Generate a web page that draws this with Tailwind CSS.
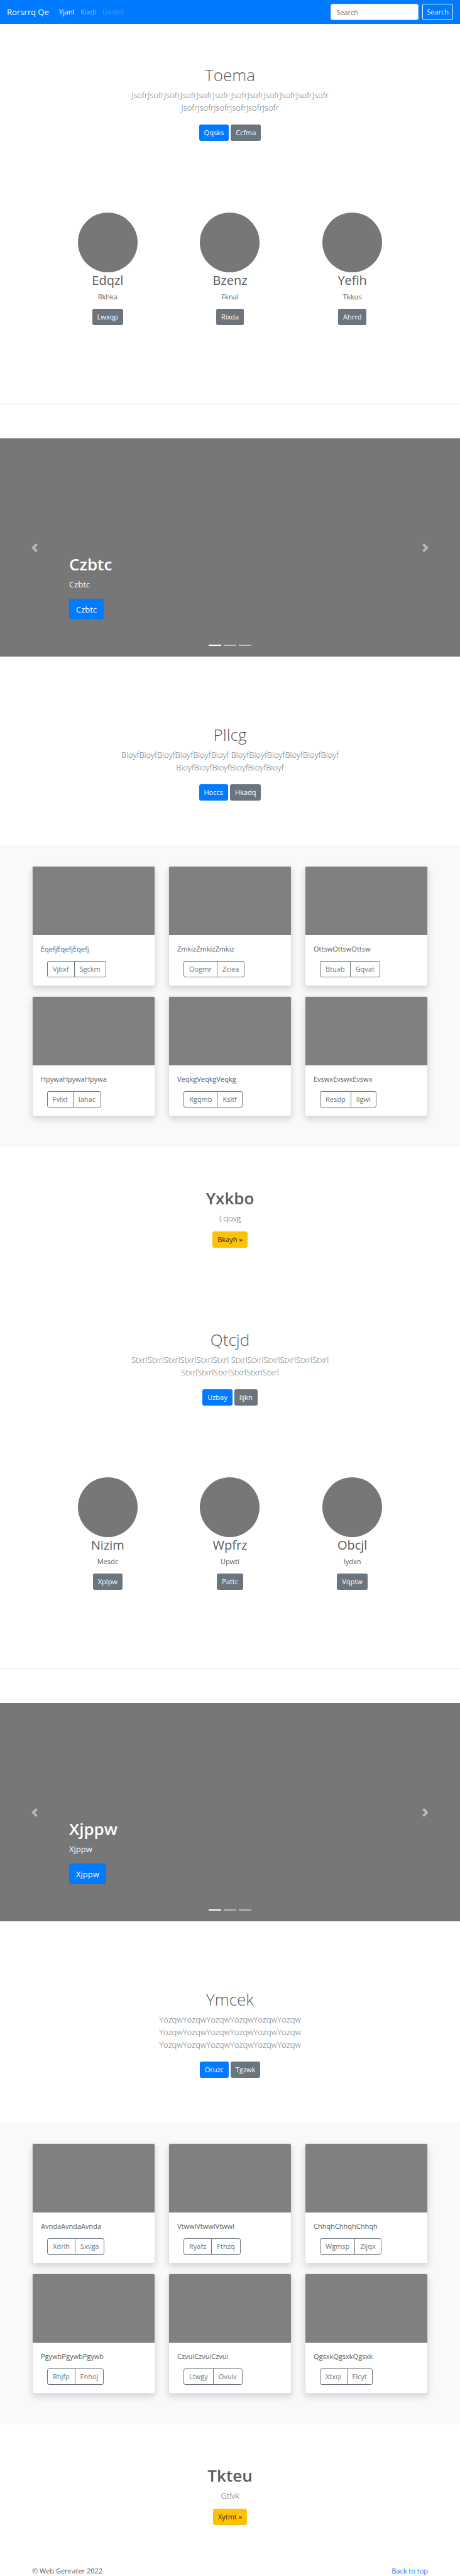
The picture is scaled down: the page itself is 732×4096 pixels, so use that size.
<!DOCTYPE html>
<html lang="en">
<head>
<meta charset="utf-8">
<meta name="viewport" content="width=device-width, initial-scale=1">
<title>Rorsrrq Qe</title>
<script src="https://cdn.jsdelivr.net/npm/@tailwindcss/browser@4"></script>
</head>
<body class="bg-white font-['Open_Sans','Noto_Sans',sans-serif] text-[11px] leading-4 text-[#5a5a5a]">

<header id="top">
  <nav class="flex items-center bg-[#007bff] px-[11px] py-[6px]">
    <a href="#" class="mr-[11px] text-[13px] leading-5 text-white">Rorsrrq Qe</a>
    <ul class="flex flex-1">
      <li><a href="#" class="px-[5px] text-white">Yjanl</a></li>
      <li><a href="#" class="px-[5px] text-white/50">Kixdi</a></li>
      <li><a href="#" class="px-[5px] text-white/25">Uxnbd</a></li>
    </ul>
    <form class="flex gap-[6px]">
      <input type="search" aria-label="Search" placeholder="Search" class="h-[26px] w-[140px] rounded-[3px] border border-[#ced4da] bg-white px-2 text-[11px] placeholder:text-[#6c757d]">
      <button type="button" class="h-[26px] rounded-[3px] border border-[#f8f9fa] px-[6px] text-[#f8f9fa]">Search</button>
    </form>
  </nav>
</header>

<main>
  <section class="pt-[65px] pb-[71px] text-center">
    <div class="mx-auto max-w-[414px]">
      <h1 class="mb-[5px] text-[26px] leading-[33px] font-light">Toema</h1>
      <p class="mb-[17px] text-[13px] leading-5 font-light text-[#6c757d]">JsofrJsofrJsofrJsofrJsofrJsofr JsofrJsofrJsofrJsofrJsofrJsofr JsofrJsofrJsofrJsofrJsofrJsofr</p>
      <div class="flex justify-center gap-[3px]">
        <button type="button" class="h-[26px] rounded-[3px] bg-[#007bff] px-2 text-white">Qqsks</button>
        <button type="button" class="h-[26px] rounded-[3px] bg-[#6c757d] px-2 text-white">Ccfma</button>
      </div>
    </div>
  </section>

  <section class="mx-auto grid max-w-[584px] grid-cols-3 pt-[43px] pb-[125px] text-center">
    <div class="flex flex-col items-center">
      <div class="size-[95px] rounded-full bg-[#777777]"></div>
      <h2 class="mb-[5px] text-[20px] leading-[26px]">Edqzl</h2>
      <p class="mb-[11px]">Rkhka</p>
      <button type="button" class="h-[26px] rounded-[3px] bg-[#6c757d] px-2 text-white">Lwxqp</button>
    </div>
    <div class="flex flex-col items-center">
      <div class="size-[95px] rounded-full bg-[#777777]"></div>
      <h2 class="mb-[5px] text-[20px] leading-[26px]">Bzenz</h2>
      <p class="mb-[11px]">Fknal</p>
      <button type="button" class="h-[26px] rounded-[3px] bg-[#6c757d] px-2 text-white">Rixda</button>
    </div>
    <div class="flex flex-col items-center">
      <div class="size-[95px] rounded-full bg-[#777777]"></div>
      <h2 class="mb-[5px] text-[20px] leading-[26px]">Yefih</h2>
      <p class="mb-[11px]">Tkkus</p>
      <button type="button" class="h-[26px] rounded-[3px] bg-[#6c757d] px-2 text-white">Ahrrd</button>
    </div>
  </section>
  <hr class="mb-[54px] border-t border-[#e5e5e5]">

  <section class="relative mb-[43px] bg-[#777777] px-[110px] pt-[184px] pb-[59px] text-white" aria-label="Slides">
    <h2 class="mb-[5px] text-[26px] leading-[33px] font-semibold">Czbtc</h2>
    <p class="mb-[13px] text-[13px] leading-5">Czbtc</p>
    <button type="button" class="h-[33px] rounded-[4px] bg-[#007bff] px-[11px] text-[13px]">Czbtc</button>
    <button type="button" aria-label="Previous" class="absolute inset-y-0 left-0 flex w-[15%] items-center justify-center text-white/50">
      <svg class="size-[14px]" viewBox="0 0 8 8" fill="currentColor"><path d="M5.25 0l-4 4 4 4 1.5-1.5L4.25 4l2.5-2.5L5.25 0z"/></svg>
    </button>
    <button type="button" aria-label="Next" class="absolute inset-y-0 right-0 flex w-[15%] items-center justify-center text-white/50">
      <svg class="size-[14px]" viewBox="0 0 8 8" fill="currentColor"><path d="M2.75 0l-1.5 1.5L3.75 4l-2.5 2.5L2.75 8l4-4-4-4z"/></svg>
    </button>
    <div class="absolute inset-x-0 bottom-[17px] flex justify-center gap-1">
      <span class="h-[2px] w-[20px] bg-white"></span>
      <span class="h-[2px] w-[20px] bg-white/50"></span>
      <span class="h-[2px] w-[20px] bg-white/50"></span>
    </div>
  </section>

  <section class="pt-[65px] pb-[71px] text-center">
    <div class="mx-auto max-w-[414px]">
      <h1 class="mb-[5px] text-[26px] leading-[33px] font-light">Pllcg</h1>
      <p class="mb-[17px] text-[13px] leading-5 font-light text-[#6c757d]">BioyfBioyfBioyfBioyfBioyfBioyf BioyfBioyfBioyfBioyfBioyfBioyf BioyfBioyfBioyfBioyfBioyfBioyf</p>
      <div class="flex justify-center gap-[3px]">
        <button type="button" class="h-[26px] rounded-[3px] bg-[#007bff] px-2 text-white">Hoccs</button>
        <button type="button" class="h-[26px] rounded-[3px] bg-[#6c757d] px-2 text-white">Hkadq</button>
      </div>
    </div>
  </section>

  <section class="grid grid-cols-3 gap-x-[21px] gap-y-4 bg-[#f8f9fa] px-[51px] pt-[33px] pb-[49px]">
    <article class="overflow-hidden rounded-[3px] border border-black/12 bg-white shadow-[0_5px_11px_rgba(0,0,0,0.15)]">
      <div class="h-[109px] bg-[#808080]"></div>
      <div class="px-[13px] pt-[14px] pb-[13px]">
        <p class="mb-[11px]">EqefjEqefjEqefj</p>
        <div class="ml-[10px] inline-flex rounded-[3px] border border-[#6c757d] align-top text-[#6c757d]">
          <button type="button" class="h-6 border-r border-[#6c757d] px-2">Vjbxf</button>
          <button type="button" class="h-6 px-2">Sgckm</button>
        </div>
      </div>
    </article>
    <article class="overflow-hidden rounded-[3px] border border-black/12 bg-white shadow-[0_5px_11px_rgba(0,0,0,0.15)]">
      <div class="h-[109px] bg-[#808080]"></div>
      <div class="px-[13px] pt-[14px] pb-[13px]">
        <p class="mb-[11px]">ZmkizZmkizZmkiz</p>
        <div class="ml-[10px] inline-flex rounded-[3px] border border-[#6c757d] align-top text-[#6c757d]">
          <button type="button" class="h-6 border-r border-[#6c757d] px-2">Oogmr</button>
          <button type="button" class="h-6 px-2">Zciea</button>
        </div>
      </div>
    </article>
    <article class="overflow-hidden rounded-[3px] border border-black/12 bg-white shadow-[0_5px_11px_rgba(0,0,0,0.15)]">
      <div class="h-[109px] bg-[#808080]"></div>
      <div class="px-[13px] pt-[14px] pb-[13px]">
        <p class="mb-[11px]">OttswOttswOttsw</p>
        <div class="ml-[10px] inline-flex rounded-[3px] border border-[#6c757d] align-top text-[#6c757d]">
          <button type="button" class="h-6 border-r border-[#6c757d] px-2">Btuab</button>
          <button type="button" class="h-6 px-2">Gqvat</button>
        </div>
      </div>
    </article>
    <article class="overflow-hidden rounded-[3px] border border-black/12 bg-white shadow-[0_5px_11px_rgba(0,0,0,0.15)]">
      <div class="h-[109px] bg-[#808080]"></div>
      <div class="px-[13px] pt-[14px] pb-[13px]">
        <p class="mb-[11px]">HpywaHpywaHpywa</p>
        <div class="ml-[10px] inline-flex rounded-[3px] border border-[#6c757d] align-top text-[#6c757d]">
          <button type="button" class="h-6 border-r border-[#6c757d] px-2">Fvlxt</button>
          <button type="button" class="h-6 px-2">Iahac</button>
        </div>
      </div>
    </article>
    <article class="overflow-hidden rounded-[3px] border border-black/12 bg-white shadow-[0_5px_11px_rgba(0,0,0,0.15)]">
      <div class="h-[109px] bg-[#808080]"></div>
      <div class="px-[13px] pt-[14px] pb-[13px]">
        <p class="mb-[11px]">VeqkgVeqkgVeqkg</p>
        <div class="ml-[10px] inline-flex rounded-[3px] border border-[#6c757d] align-top text-[#6c757d]">
          <button type="button" class="h-6 border-r border-[#6c757d] px-2">Rgqmb</button>
          <button type="button" class="h-6 px-2">Ksltf</button>
        </div>
      </div>
    </article>
    <article class="overflow-hidden rounded-[3px] border border-black/12 bg-white shadow-[0_5px_11px_rgba(0,0,0,0.15)]">
      <div class="h-[109px] bg-[#808080]"></div>
      <div class="px-[13px] pt-[14px] pb-[13px]">
        <p class="mb-[11px]">EvswxEvswxEvswx</p>
        <div class="ml-[10px] inline-flex rounded-[3px] border border-[#6c757d] align-top text-[#6c757d]">
          <button type="button" class="h-6 border-r border-[#6c757d] px-2">Resdp</button>
          <button type="button" class="h-6 px-2">Ilgwi</button>
        </div>
      </div>
    </article>
  </section>

  <section class="py-[65px] text-center">
    <h1 class="mb-[5px] text-[26px] leading-[33px] font-semibold">Yxkbo</h1>
    <p class="mb-[11px] text-[13px] leading-5 font-light">Lqovg</p>
    <button type="button" class="h-[26px] rounded-[3px] bg-[#ffc107] px-2 align-top text-[#212529]">Bkayh »</button>
  </section>

  <section class="pt-[65px] pb-[71px] text-center">
    <div class="mx-auto max-w-[414px]">
      <h1 class="mb-[5px] text-[26px] leading-[33px] font-light">Qtcjd</h1>
      <p class="mb-[17px] text-[13px] leading-5 font-light text-[#6c757d]">StxrlStxrlStxrlStxrlStxrlStxrl StxrlStxrlStxrlStxrlStxrlStxrl StxrlStxrlStxrlStxrlStxrlStxrl</p>
      <div class="flex justify-center gap-[3px]">
        <button type="button" class="h-[26px] rounded-[3px] bg-[#007bff] px-2 text-white">Uzbay</button>
        <button type="button" class="h-[26px] rounded-[3px] bg-[#6c757d] px-2 text-white">Iijkn</button>
      </div>
    </div>
  </section>

  <section class="mx-auto grid max-w-[584px] grid-cols-3 pt-[43px] pb-[125px] text-center">
    <div class="flex flex-col items-center">
      <div class="size-[95px] rounded-full bg-[#777777]"></div>
      <h2 class="mb-[5px] text-[20px] leading-[26px]">Nizim</h2>
      <p class="mb-[11px]">Mesdc</p>
      <button type="button" class="h-[26px] rounded-[3px] bg-[#6c757d] px-2 text-white">Xplpw</button>
    </div>
    <div class="flex flex-col items-center">
      <div class="size-[95px] rounded-full bg-[#777777]"></div>
      <h2 class="mb-[5px] text-[20px] leading-[26px]">Wpfrz</h2>
      <p class="mb-[11px]">Upwti</p>
      <button type="button" class="h-[26px] rounded-[3px] bg-[#6c757d] px-2 text-white">Pattc</button>
    </div>
    <div class="flex flex-col items-center">
      <div class="size-[95px] rounded-full bg-[#777777]"></div>
      <h2 class="mb-[5px] text-[20px] leading-[26px]">Obcjl</h2>
      <p class="mb-[11px]">Iydxn</p>
      <button type="button" class="h-[26px] rounded-[3px] bg-[#6c757d] px-2 text-white">Vqptw</button>
    </div>
  </section>
  <hr class="mb-[54px] border-t border-[#e5e5e5]">

  <section class="relative mb-[43px] bg-[#777777] px-[110px] pt-[184px] pb-[59px] text-white" aria-label="Slides">
    <h2 class="mb-[5px] text-[26px] leading-[33px] font-semibold">Xjppw</h2>
    <p class="mb-[13px] text-[13px] leading-5">Xjppw</p>
    <button type="button" class="h-[33px] rounded-[4px] bg-[#007bff] px-[11px] text-[13px]">Xjppw</button>
    <button type="button" aria-label="Previous" class="absolute inset-y-0 left-0 flex w-[15%] items-center justify-center text-white/50">
      <svg class="size-[14px]" viewBox="0 0 8 8" fill="currentColor"><path d="M5.25 0l-4 4 4 4 1.5-1.5L4.25 4l2.5-2.5L5.25 0z"/></svg>
    </button>
    <button type="button" aria-label="Next" class="absolute inset-y-0 right-0 flex w-[15%] items-center justify-center text-white/50">
      <svg class="size-[14px]" viewBox="0 0 8 8" fill="currentColor"><path d="M2.75 0l-1.5 1.5L3.75 4l-2.5 2.5L2.75 8l4-4-4-4z"/></svg>
    </button>
    <div class="absolute inset-x-0 bottom-[17px] flex justify-center gap-1">
      <span class="h-[2px] w-[20px] bg-white"></span>
      <span class="h-[2px] w-[20px] bg-white/50"></span>
      <span class="h-[2px] w-[20px] bg-white/50"></span>
    </div>
  </section>

  <section class="pt-[65px] pb-[71px] text-center">
    <div class="mx-auto max-w-[414px]">
      <h1 class="mb-[5px] text-[26px] leading-[33px] font-light">Ymcek</h1>
      <p class="mb-[17px] text-[13px] leading-5 font-light text-[#6c757d]">YozqwYozqwYozqwYozqwYozqwYozqw YozqwYozqwYozqwYozqwYozqwYozqw YozqwYozqwYozqwYozqwYozqwYozqw</p>
      <div class="flex justify-center gap-[3px]">
        <button type="button" class="h-[26px] rounded-[3px] bg-[#007bff] px-2 text-white">Oruzc</button>
        <button type="button" class="h-[26px] rounded-[3px] bg-[#6c757d] px-2 text-white">Tgzwk</button>
      </div>
    </div>
  </section>

  <section class="grid grid-cols-3 gap-x-[21px] gap-y-4 bg-[#f8f9fa] px-[51px] pt-[33px] pb-[49px]">
    <article class="overflow-hidden rounded-[3px] border border-black/12 bg-white shadow-[0_5px_11px_rgba(0,0,0,0.15)]">
      <div class="h-[109px] bg-[#808080]"></div>
      <div class="px-[13px] pt-[14px] pb-[13px]">
        <p class="mb-[11px]">AvndaAvndaAvnda</p>
        <div class="ml-[10px] inline-flex rounded-[3px] border border-[#6c757d] align-top text-[#6c757d]">
          <button type="button" class="h-6 border-r border-[#6c757d] px-2">Xdrlh</button>
          <button type="button" class="h-6 px-2">Sxvga</button>
        </div>
      </div>
    </article>
    <article class="overflow-hidden rounded-[3px] border border-black/12 bg-white shadow-[0_5px_11px_rgba(0,0,0,0.15)]">
      <div class="h-[109px] bg-[#808080]"></div>
      <div class="px-[13px] pt-[14px] pb-[13px]">
        <p class="mb-[11px]">VtwwlVtwwlVtwwl</p>
        <div class="ml-[10px] inline-flex rounded-[3px] border border-[#6c757d] align-top text-[#6c757d]">
          <button type="button" class="h-6 border-r border-[#6c757d] px-2">Ryafz</button>
          <button type="button" class="h-6 px-2">Fthzq</button>
        </div>
      </div>
    </article>
    <article class="overflow-hidden rounded-[3px] border border-black/12 bg-white shadow-[0_5px_11px_rgba(0,0,0,0.15)]">
      <div class="h-[109px] bg-[#808080]"></div>
      <div class="px-[13px] pt-[14px] pb-[13px]">
        <p class="mb-[11px]">ChhqhChhqhChhqh</p>
        <div class="ml-[10px] inline-flex rounded-[3px] border border-[#6c757d] align-top text-[#6c757d]">
          <button type="button" class="h-6 border-r border-[#6c757d] px-2">Wgmsp</button>
          <button type="button" class="h-6 px-2">Zijqx</button>
        </div>
      </div>
    </article>
    <article class="overflow-hidden rounded-[3px] border border-black/12 bg-white shadow-[0_5px_11px_rgba(0,0,0,0.15)]">
      <div class="h-[109px] bg-[#808080]"></div>
      <div class="px-[13px] pt-[14px] pb-[13px]">
        <p class="mb-[11px]">PgywbPgywbPgywb</p>
        <div class="ml-[10px] inline-flex rounded-[3px] border border-[#6c757d] align-top text-[#6c757d]">
          <button type="button" class="h-6 border-r border-[#6c757d] px-2">Rhjfp</button>
          <button type="button" class="h-6 px-2">Fnhoj</button>
        </div>
      </div>
    </article>
    <article class="overflow-hidden rounded-[3px] border border-black/12 bg-white shadow-[0_5px_11px_rgba(0,0,0,0.15)]">
      <div class="h-[109px] bg-[#808080]"></div>
      <div class="px-[13px] pt-[14px] pb-[13px]">
        <p class="mb-[11px]">CzvuiCzvuiCzvui</p>
        <div class="ml-[10px] inline-flex rounded-[3px] border border-[#6c757d] align-top text-[#6c757d]">
          <button type="button" class="h-6 border-r border-[#6c757d] px-2">Ltwgy</button>
          <button type="button" class="h-6 px-2">Ovuiv</button>
        </div>
      </div>
    </article>
    <article class="overflow-hidden rounded-[3px] border border-black/12 bg-white shadow-[0_5px_11px_rgba(0,0,0,0.15)]">
      <div class="h-[109px] bg-[#808080]"></div>
      <div class="px-[13px] pt-[14px] pb-[13px]">
        <p class="mb-[11px]">QgsxkQgsxkQgsxk</p>
        <div class="ml-[10px] inline-flex rounded-[3px] border border-[#6c757d] align-top text-[#6c757d]">
          <button type="button" class="h-6 border-r border-[#6c757d] px-2">Xtxqi</button>
          <button type="button" class="h-6 px-2">Ficyt</button>
        </div>
      </div>
    </article>
  </section>

  <section class="py-[65px] text-center">
    <h1 class="mb-[5px] text-[26px] leading-[33px] font-semibold">Tkteu</h1>
    <p class="mb-[11px] text-[13px] leading-5 font-light">Gtlvk</p>
    <button type="button" class="h-[26px] rounded-[3px] bg-[#ffc107] px-2 align-top text-[#212529]">Xytmt »</button>
  </section>
</main>

<footer class="flex justify-between px-[51px]">
  <p>© Web Genrater 2022</p>
  <a href="#top" class="text-[#007bff]">Back to top</a>
</footer>

</body>
</html>
